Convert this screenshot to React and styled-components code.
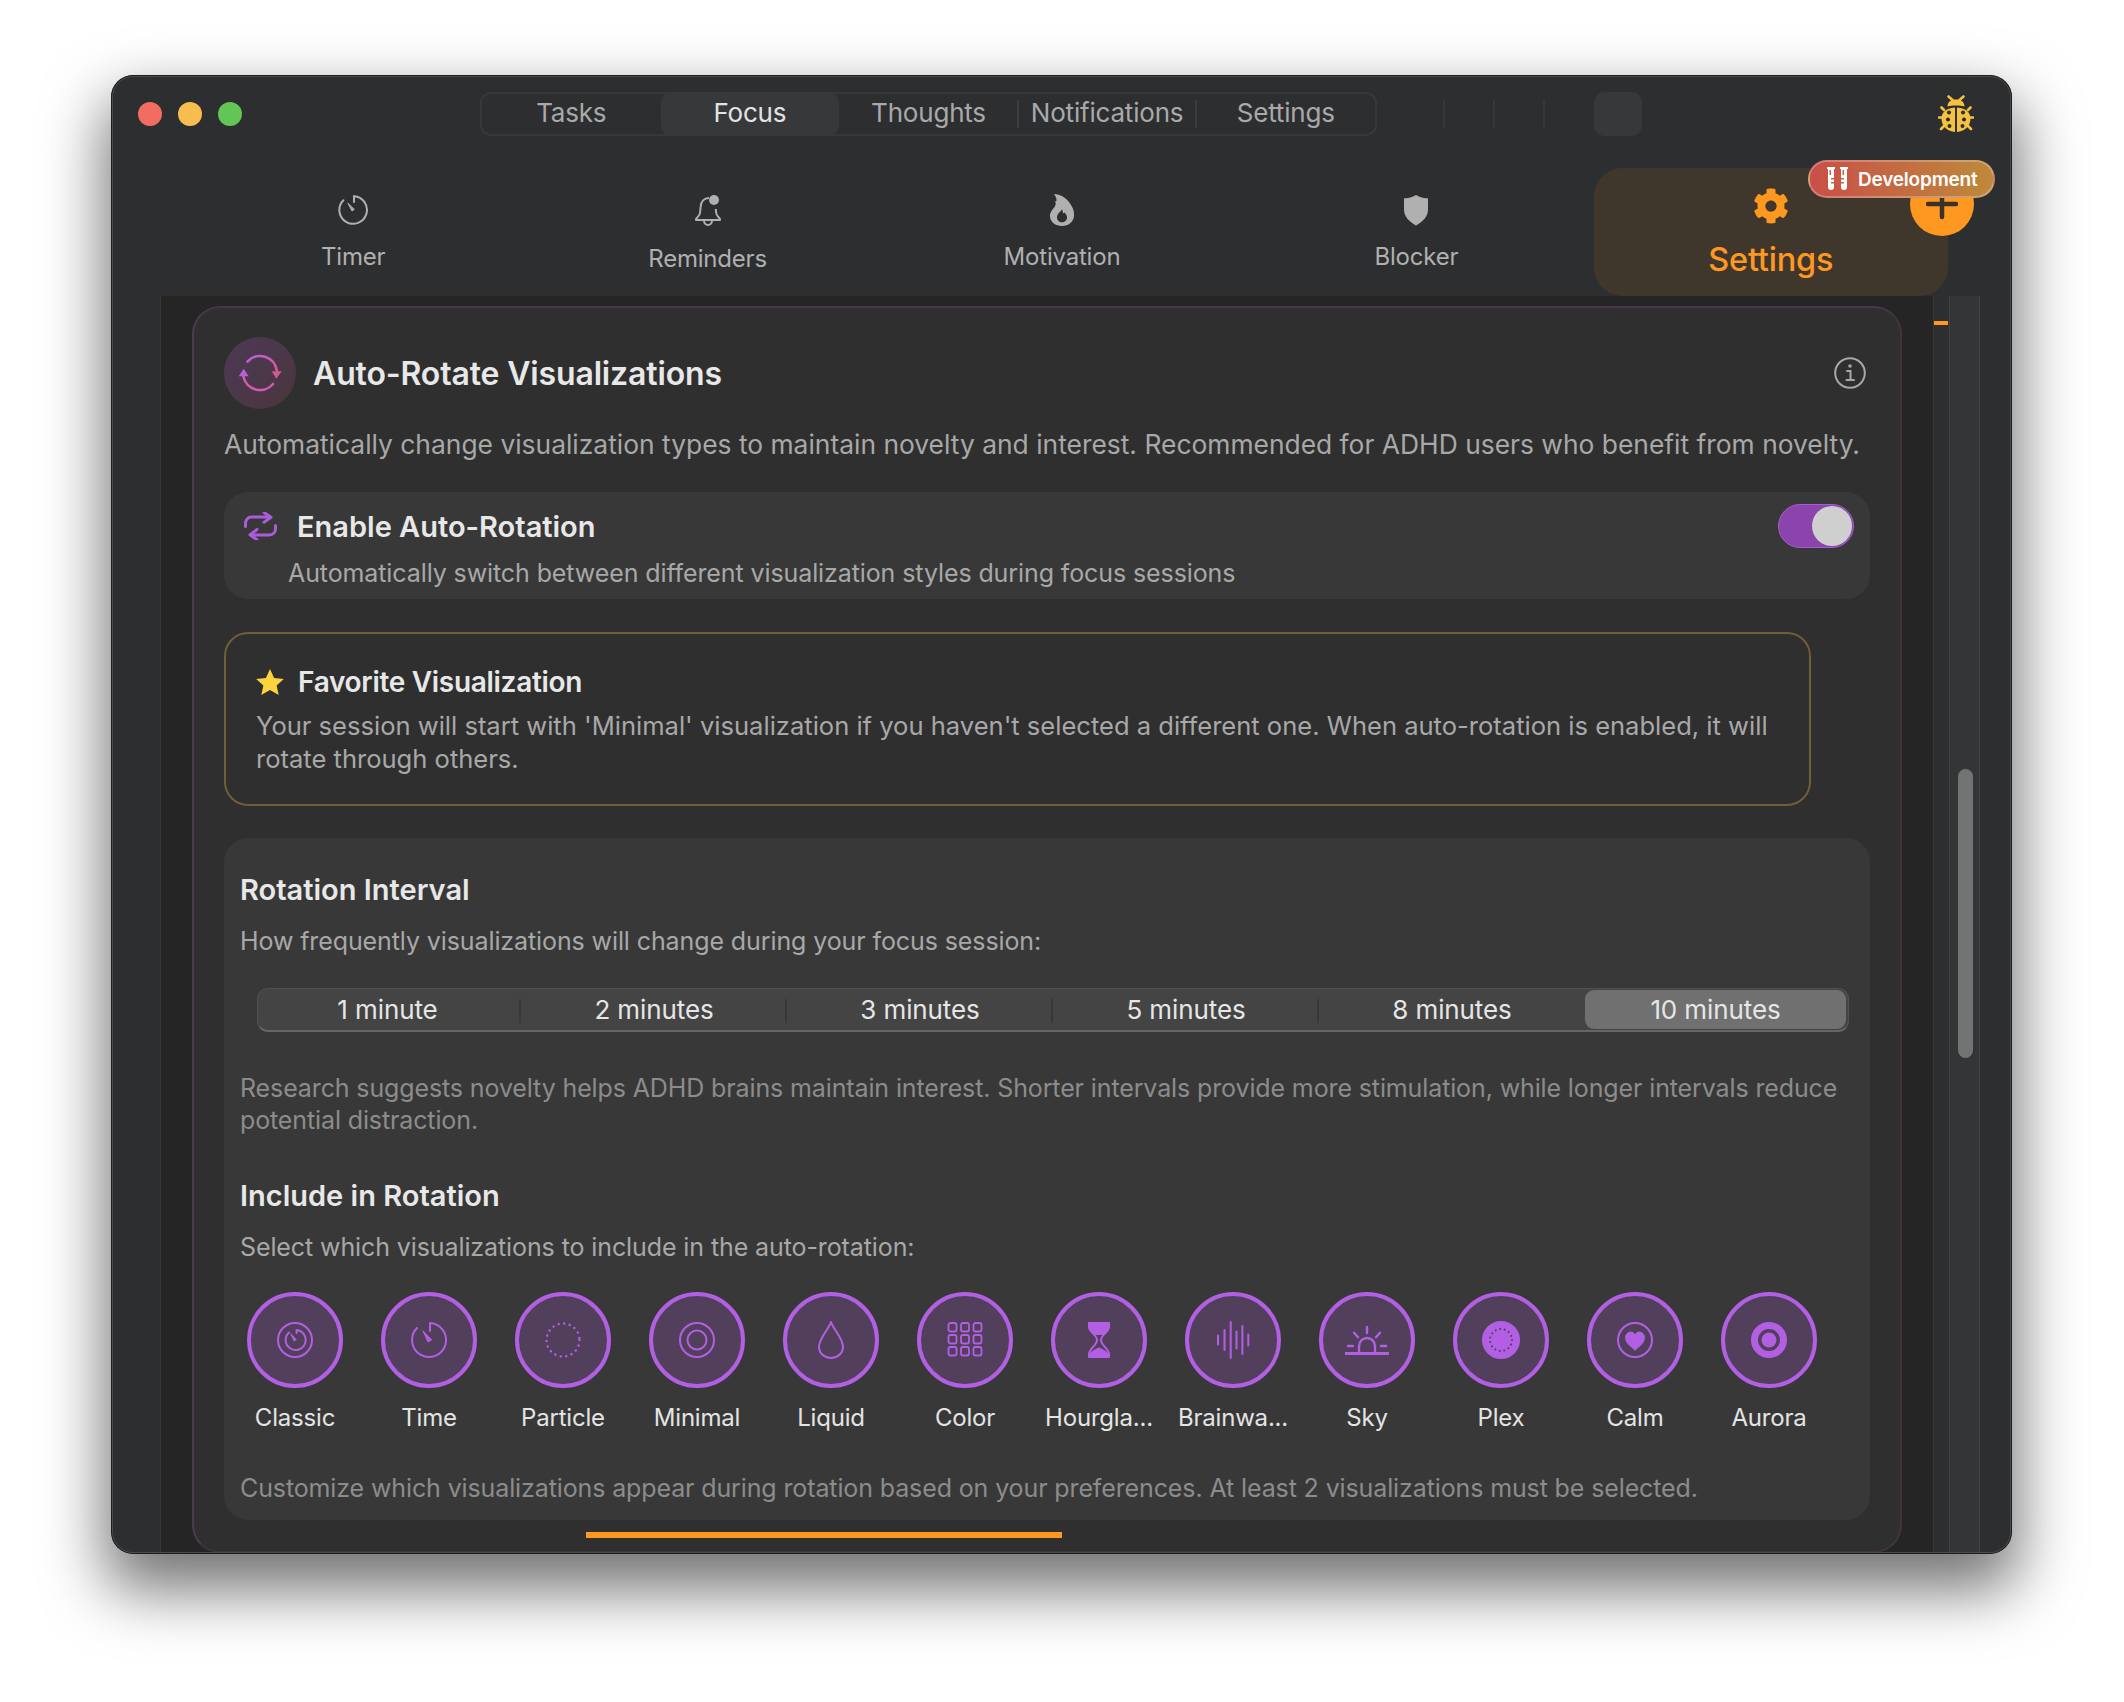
import React from 'react';
import styled, { createGlobalStyle } from 'styled-components';
import { FaCog } from 'react-icons/fa';

const GlobalStyle = createGlobalStyle`
  html, body {
    margin: 0;
    background: #fff;
  }
  body {
    font-family: Inter, "Noto Sans", sans-serif;
    -webkit-font-smoothing: antialiased;
  }
  * { box-sizing: border-box; }
`;

const Page = styled.div`
  width: 2124px;
  height: 1702px;
  padding: 75px 0 0 111px;
  overflow: hidden;
  background: #fff;
`;

const Window = styled.div`
  position: relative;
  width: 1901px;
  height: 1479px;
  display: flex;
  flex-direction: column;
  background: #2d2e30;
  border-radius: 22px;
  overflow: hidden;
`;

const WindowShadow = styled.div`
  width: 1901px;
  height: 1479px;
  border-radius: 22px;
  box-shadow: 0 30px 62px 6px rgba(0, 0, 0, 0.55);
`;

const WindowEdge = styled.div`
  position: absolute;
  inset: 0;
  border-radius: 22px;
  box-shadow: inset 0 0 0 1px #1c1c1c, inset 0 0 0 2px #4a4b4e;
  pointer-events: none;
`;

const TitleBar = styled.div`
  height: 93px;
  padding: 17px 0 0 27px;
  display: flex;
  align-items: flex-start;
`;

const Lights = styled.div`
  display: flex;
  gap: 16px;
  margin: 10px 238px 0 0;
`;

const Light = styled.span`
  width: 24px;
  height: 24px;
  border-radius: 50%;
  background: ${(p) => p.$color};
`;

const Tabs = styled.div`
  width: 897px;
  height: 44px;
  display: grid;
  grid-template-columns: repeat(5, 1fr);
  border: 2px solid #37383a;
  border-radius: 11px;
  margin-right: 66px;
`;

const Tab = styled.div`
  position: relative;
  margin: -2px 0;
  padding-bottom: 3px;
  display: flex;
  align-items: center;
  justify-content: center;
  font-size: 26px;
  letter-spacing: -0.2px;
  color: ${(p) => (p.$active ? '#e3e3e3' : '#a9a9a9')};
  background: ${(p) => (p.$active ? '#37383a' : 'transparent')};
  border-radius: 11px;

  &::after {
    content: '';
    display: ${(p) => (p.$sep ? 'block' : 'none')};
    position: absolute;
    right: -1px;
    top: 8px;
    width: 2px;
    height: 28px;
    background: #3b3c3e;
  }
`;

const Ticks = styled.div`
  display: flex;
  gap: 48px;
  margin: 8px 49px 0 0;
`;

const Tick = styled.span`
  width: 2px;
  height: 28px;
  background: #37383a;
`;

const Blank = styled.div`
  width: 48px;
  height: 44px;
  border-radius: 10px;
  background: #37383a;
  margin-right: 296px;
`;

const BugSlot = styled.div`
  margin-top: 3px;
  line-height: 0;
`;

const Nav = styled.div`
  height: 128px;
  margin-left: 65px;
  width: 1772px;
  display: grid;
  grid-template-columns: repeat(5, 354.4px);
`;

const NavItem = styled.div`
  display: flex;
  flex-direction: column;
  align-items: center;
  padding-top: ${(p) => (p.$active ? '16px' : '20px')};
  border-radius: 28px;
  background: ${(p) => (p.$active ? '#40372c' : 'transparent')};
  color: ${(p) => (p.$active ? '#ff9820' : '#b0b0b0')};
`;

const NavIcon = styled.div`
  height: ${(p) => p.$h || 44}px;
  display: flex;
  align-items: center;
  justify-content: center;
`;

const NavLabel = styled.div`
  margin-top: ${(p) => (p.$active ? '17px' : '10px')};
  font-size: ${(p) => (p.$active ? '32.5px' : '24px')};
  line-height: 30px;
  letter-spacing: -0.2px;
  font-weight: ${(p) => (p.$active ? 500 : 400)};
`;

const DevBadge = styled.div`
  position: absolute;
  left: 1697px;
  top: 85px;
  width: 187px;
  height: 38px;
  z-index: 3;
  display: flex;
  align-items: center;
  gap: 9px;
  padding-left: 16px;
  border-radius: 19px;
  border: 2px solid rgba(255, 255, 255, 0.25);
  background: linear-gradient(90deg, #c94f48, #bd8a3b);
  color: #fff;
  font-size: 19px;
  font-weight: 600;
  letter-spacing: -0.2px;
`;

const PlusButton = styled.div`
  position: absolute;
  left: 1799px;
  top: 97px;
  width: 64px;
  height: 64px;
  z-index: 2;
  border-radius: 50%;
  background: #ff9820;
  display: flex;
  align-items: center;
  justify-content: center;
`;

const Body = styled.div`
  flex: 1;
  min-height: 0;
  display: flex;
`;

const Gutter = styled.div`
  width: 49px;
  flex: none;
`;

const Scroller = styled.div`
  width: 1774px;
  flex: none;
  display: flex;
  padding: 10px 32px 1px 31px;
  background: #252525;
  border-left: 1px solid #3d352c;
  border-right: 1px solid #3d352c;
`;

const Card = styled.div`
  width: 1710px;
  flex: none;
  padding: 29px 30px 0 30px;
  background: #2f2f2f;
  border-radius: 28px;
  border: 2px solid #40343f;
  border-top-color: #44364c;
  border-left-color: #4a3a52;
`;

const CardHeader = styled.div`
  display: flex;
  align-items: center;
  height: 72px;
`;

const HeaderBadge = styled.div`
  width: 72px;
  height: 72px;
  border-radius: 50%;
  background: linear-gradient(135deg, #4c3a55, #4a353d);
  display: flex;
  align-items: center;
  justify-content: center;
`;

const CardTitle = styled.div`
  flex: 1;
  margin-left: 17px;
  font-size: 32px;
  font-weight: 600;
  letter-spacing: -0.15px;
  color: #e8e8e8;
`;

const InfoSlot = styled.div`
  margin-right: 4px;
  line-height: 0;
`;

const Lead = styled.div`
  margin-top: 19px;
  font-size: 26.4px;
  line-height: 32px;
  color: #a8a8a8;
  white-space: nowrap;
`;

const EnablePanel = styled.div`
  margin-top: 32px;
  height: 107px;
  padding: 16px 16px 0 20px;
  background: #383838;
  border-radius: 24px;
  display: flex;
  justify-content: space-between;
  align-items: flex-start;
`;

const EnableTitle = styled.div`
  display: flex;
  align-items: center;
  gap: 20px;
  height: 36px;
  font-size: 29px;
  font-weight: 600;
  color: #e8e8e8;
`;

const EnableText = styled.div`
  margin: 13px 0 0 44px;
  font-size: 25px;
  line-height: 32px;
  letter-spacing: -0.1px;
  color: #a8a8a8;
`;

const Toggle = styled.div`
  width: 76px;
  height: 44px;
  margin-top: -4px;
  padding: 1px;
  border-radius: 22px;
  border: 1px solid #a45fca;
  background: #8a44ac;
  display: flex;
  justify-content: flex-end;
`;

const Knob = styled.span`
  width: 40px;
  height: 40px;
  border-radius: 50%;
  background: #cfcfcf;
`;

const FavoriteBox = styled.div`
  width: 1587px;
  height: 174px;
  margin-top: 33px;
  padding: 30px 30px 0 30px;
  border: 2px solid #6e5f35;
  border-radius: 24px;
`;

const FavoriteTitle = styled.div`
  display: flex;
  align-items: center;
  gap: 14px;
  height: 36px;
  font-size: 28px;
  font-weight: 600;
  letter-spacing: -0.3px;
  color: #e8e8e8;
`;

const FavoriteText = styled.div`
  margin-top: 10px;
  font-size: 25.55px;
  line-height: 32.5px;
  color: #a8a8a8;
`;

const RotationPanel = styled.div`
  height: 682px;
  margin-top: 32px;
  padding: 34px 16px 0;
  border-radius: 24px;
  background: #383838;
`;

const SectionTitle = styled.div`
  height: 36px;
  line-height: 36px;
  font-size: 29px;
  font-weight: 600;
  color: #e8e8e8;
`;

const SectionText = styled.div`
  margin-top: 17px;
  font-size: 25px;
  line-height: 32px;
  letter-spacing: -0.1px;
  color: #a8a8a8;
`;

const Segments = styled.div`
  width: 1592px;
  height: 44px;
  margin: 31px 0 0 17px;
  padding: 1px 0;
  display: grid;
  grid-template-columns: 263px repeat(4, 266px) 261px;
  border-radius: 11px;
  background: #444;
  border: 1px solid #505050;
  border-bottom: 2px solid #666;
`;

const Segment = styled.div`
  position: relative;
  display: flex;
  align-items: center;
  justify-content: center;
  padding-right: ${(p) => (p.$first ? '4px' : '0')};
  padding-bottom: 1px;
  font-size: 26px;
  letter-spacing: -0.1px;
  color: #e6e6e6;
  border-radius: 9px;
  background: ${(p) => (p.$active ? '#707070' : 'transparent')};

  &::after {
    content: '';
    display: ${(p) => (p.$sep ? 'block' : 'none')};
    position: absolute;
    right: 0;
    top: 9px;
    bottom: 6px;
    width: 2px;
    background: #383838;
  }
`;

const Note = styled.div`
  margin-top: ${(p) => p.$top}px;
  font-size: 25px;
  line-height: 32px;
  letter-spacing: -0.12px;
  color: #8c8c8c;
`;

const IncludeTitle = styled(SectionTitle)`
  margin-top: 42px;
`;

const VizGrid = styled.div`
  margin: 29px 0 0 -12px;
  display: grid;
  grid-template-columns: repeat(12, 134px);
`;

const VizItem = styled.div`
  display: flex;
  flex-direction: column;
  align-items: center;
`;

const VizCircle = styled.div`
  width: 96px;
  height: 96px;
  border-radius: 50%;
  border: 4px solid #b25fe4;
  background: #523f5c;
  color: #b25fe4;
  display: flex;
  align-items: center;
  justify-content: center;
`;

const VizLabel = styled.div`
  margin-top: 16px;
  max-width: 118px;
  font-size: 24px;
  line-height: 28px;
  letter-spacing: -0.2px;
  white-space: nowrap;
  color: #e4e4e4;
`;

const ProgressBar = styled.div`
  width: 476px;
  height: 6px;
  margin: 12px 0 0 362px;
  background: #ff9820;
`;

const ScrollRail = styled.div`
  position: relative;
  width: 46px;
  flex: none;
  padding-left: 15px;
`;

const Marker = styled.span`
  position: absolute;
  left: 0;
  top: 25px;
  width: 14px;
  height: 4px;
  background: #ff9820;
`;

const Track = styled.div`
  width: 31px;
  height: 100%;
  padding: 473px 6px 0 8px;
  background: #343537;
  border-left: 1px solid #404144;
  border-right: 1px solid #404144;
`;

const Thumb = styled.div`
  width: 15px;
  height: 289px;
  border-radius: 8px;
  background: #727473;
`;

const TimerIcon = () => (
  <svg width="32" height="32" viewBox="0 0 32 32" fill="none" stroke="currentColor" strokeWidth="2" strokeLinecap="round">
    <path d="M17 2.2a13.8 13.8 0 1 1-10.6 4" />
    <path d="M17 2.2V8" />
    <path d="M11 9.5l4 7.5 2-1.4z" fill="currentColor" strokeWidth="1" />
  </svg>
);

const BellIcon = () => (
  <svg width="30" height="34" viewBox="0 0 30 34" fill="none" stroke="currentColor" strokeWidth="2" strokeLinejoin="round">
    <path d="M16 4c-5 0-8 3.5-8.3 8.5L7 19c-.3 2.5-2.5 4-4 6v1h24v-1c-1.500-2-3.500-3.500-3.800-6l-.4-4" />
    <path d="M11 26.500c0 6 8 6 8 0" />
    <circle cx="21" cy="6" r="5" fill="currentColor" stroke="none" />
  </svg>
);

const FlameIcon = () => (
  <svg width="26" height="32" viewBox="0 0 26 32" fill="currentColor">
    <path fillRule="evenodd" d="M5 0c6.500.5 11 3 15 8 3.500 4.500 5.500 9 5 14-.5 6-5.500 10-12 10S1 28 1 22c0-4 2.500-6.500 4.500-9C7 11 7 9 6 7 8 8 8.500 5 5 0zm8 15c-.5 2.500-5 4-5 8.500 0 2.800 2.200 4.800 5 4.800s5-2 5-4.800c0-2.500-1.500-3-2-5-.8 1-1.600 1-2 .2-.4-1-.5-2.500-1-3.700z" />
  </svg>
);

const ShieldIcon = () => (
  <svg width="26" height="32" viewBox="0 0 26 32" fill="currentColor">
    <path d="M13 1c3 1.800 6.500 3 11 3.300.8 0 1 .5 1 1.200v10c0 7-5 12-12 16C6 27.500 1 22.500 1 15.500v-10c0-.7.2-1.200 1-1.200C6.500 4 10 2.800 13 1z" />
  </svg>
);

const BugIcon = () => (
  <svg width="36" height="38" viewBox="0 0 36 38" fill="#f5c142">
    <path d="M10.500 1.500L14.500 5M25.500 1.500L21.500 5M3.500 12.500L6 15M32.500 12.500L30 15M1 22.500H4M35 22.500H32M3 34L6 31M33 34L30 31" stroke="#f5c142" strokeWidth="2.600" strokeLinecap="round" />
    <path d="M9.500 11.500C9.500 7 13 4.500 18 4.500s8.500 2.500 8.500 7c-2.500-.7-5.500-1-8.500-1s-6 .3-8.500 1z" />
    <path d="M17 12.500V37C9.500 36.500 3.500 31 3.500 23.500c0-5.500 4-10.500 13.500-11zM19 12.500C28.500 13 32.500 18 32.500 23.500 32.500 31 26.500 36.500 19 37z" />
    <g fill="#2d2e30">
      <circle cx="11" cy="17.500" r="2" /><circle cx="25" cy="17.500" r="2" />
      <circle cx="10" cy="24.500" r="2" /><circle cx="26" cy="24.500" r="2" />
      <circle cx="11.500" cy="31" r="2" /><circle cx="24.500" cy="31" r="2" />
    </g>
  </svg>
);

const TubesIcon = () => (
  <svg width="23" height="24" viewBox="0 0 23 24" fill="#fff">
    <path d="M1 0h8v2H8v18a3 3 0 0 1-6 0V2H1zM14 0h8v2h-1v18a3 3 0 0 1-6 0V2h-1z" />
    <path d="M3.500 3h1.500v5H3.500zM16.500 3H18v5h-1.500z" fill="#c4654a" />
    <path d="M5 11h3v1.500H5zM5 15h3v1.500H5zM15 11h3v1.500h-3zM15 15h3v1.500h-3z" fill="#c4654a" />
  </svg>
);

const PlusIcon = () => (
  <svg width="32" height="32" viewBox="0 0 32 32" stroke="#3a3128" strokeWidth="4.500" strokeLinecap="round">
    <path d="M16 3v26M2 16h28" />
  </svg>
);

const RotateIcon = () => (
  <svg width="44" height="44" viewBox="0 0 44 44" fill="none" strokeWidth="2.600" strokeLinecap="round">
    <defs>
      <linearGradient id="rotA" x1="0" y1="0" x2="1" y2="1">
        <stop offset="0" stopColor="#b85fdc" />
        <stop offset="1" stopColor="#d85a90" />
      </linearGradient>
    </defs>
    <path d="M9.500 10.500A17 17 0 0 1 38.800 19.500" stroke="url(#rotA)" />
    <path d="M35 33A17 17 0 0 1 5.300 25" stroke="#cf5cae" />
    <path d="M.7 25.300L5.700 17.700 10.700 25.300z" fill="#b85fdc" />
    <path d="M33.700 20.300L43.700 20.300 38.300 27.700z" fill="#d2588f" />
  </svg>
);

const InfoIcon = () => (
  <svg width="32" height="32" viewBox="0 0 32 32" fill="none" stroke="#a8a8a8" strokeWidth="2">
    <circle cx="16" cy="16" r="14.800" />
    <path d="M13 14h3.500v9M12.500 23h7.500" strokeLinecap="round" />
    <circle cx="16" cy="9" r="1.800" fill="#a8a8a8" stroke="none" />
  </svg>
);

const RepeatIcon = () => (
  <svg width="33" height="28" viewBox="0 0 33 28" fill="none" stroke="#ab5bdc" strokeWidth="3" strokeLinecap="round" strokeLinejoin="round">
    <path d="M1.500 14.500v-3c0-3.600 2.500-6.500 6-6.500h18" />
    <path d="M20 .5L27 5.200l-7 5" />
    <path d="M31.500 13.500v3c0 3.600-2.500 6.500-6 6.500H7" />
    <path d="M13 17.500L6 22.800l7 5" />
  </svg>
);

const StarIcon = () => (
  <svg width="28" height="26" viewBox="0 0 28 26" fill="#fbd33f">
    <path d="M14 0l4.100 9 9.700 1-7.200 6.500 2.100 9.500L14 21l-8.700 5 2.100-9.500L.2 10l9.700-1z" />
  </svg>
);

const Glyph = ({ children, fill = 'none' }) => (
  <svg width="44" height="44" viewBox="0 0 44 44" fill={fill} stroke="currentColor" strokeWidth="2" strokeLinecap="round" strokeLinejoin="round">
    {children}
  </svg>
);

const vizGlyphs = {
  Classic: (
    <Glyph>
      <circle cx="22" cy="22" r="17" />
      <path d="M23.500 12a10 10 0 1 1-7.500 2.500M23.500 12v3" />
      <path d="M18 16l3 7 2-1.200z" fill="currentColor" strokeWidth="1" />
    </Glyph>
  ),
  Time: (
    <Glyph>
      <path d="M23 5a17 17 0 1 1-13 5M23 5v8" />
      <path d="M16 13l5 11 3.500-2z" fill="currentColor" strokeWidth="1" />
    </Glyph>
  ),
  Particle: (
    <Glyph>
      <circle cx="22" cy="22" r="16.500" strokeWidth="2.400" strokeDasharray="0.1 5.500" />
    </Glyph>
  ),
  Minimal: (
    <Glyph>
      <circle cx="22" cy="22" r="17" />
      <circle cx="22" cy="22" r="9.500" />
    </Glyph>
  ),
  Liquid: (
    <Glyph>
      <path d="M22 4C20 11 10 20 10 29a12 11 0 0 0 24 0C34 20 24 11 22 4z" />
    </Glyph>
  ),
  Color: (
    <Glyph>
      {[5, 17, 29].map((y) => [5.5, 18, 30.5].map((x) => (
        <rect key={`${x}-${y}`} x={x} y={y} width="8" height="8.500" rx="2" strokeWidth="1.800" />
      )))}
    </Glyph>
  ),
  Hourglass: (
    <Glyph>
      <path d="M12 5h20v3c0 6-8 9-8 14s7 8 8 14v3H12v-3c1-6 8-9 8-14s-8-8-8-14z" />
      <path d="M12 5h20v4c-.5 3-2.500 5-5 7H17c-2.500-2-4.500-4-5-7z" fill="currentColor" />
      <path d="M13 37c1.500-2.500 6-5 9-6.500 3 1.500 7.500 4 9 6.500v2H13z" fill="currentColor" />
    </Glyph>
  ),
  Brainwave: (
    <Glyph>
      <path d="M7 17.500v9M13.500 12v20M19.700 4v36M25.500 13.500v17M31.400 8v28M37.300 16.500v11" />
    </Glyph>
  ),
  Sky: (
    <Glyph>
      <path d="M0 35.500h44" strokeWidth="3" strokeLinecap="butt" />
      <path d="M14 34v-6a8 8 0 0 1 16 0v6" strokeWidth="2.400" />
      <path d="M22 9v6M9 14.700l4 4.600M35 14.700l-4 4.600M3 28h5M36 28h5" strokeWidth="2.400" />
    </Glyph>
  ),
  Plex: (
    <Glyph>
      <circle cx="22" cy="22" r="18" fill="currentColor" />
      <circle cx="22" cy="22" r="11" stroke="#523f5c" strokeWidth="2" strokeDasharray="0.1 4.500" />
    </Glyph>
  ),
  Calm: (
    <Glyph>
      <circle cx="22" cy="22" r="17" />
      <path d="M22 32c-5-4-9.500-7.500-9.500-12.500 0-3 2.300-5.500 5-5.500 2 0 3.500 1 4.500 3 1-2 2.500-3 4.500-3 2.700 0 5 2.500 5 5.500C31.500 24.500 27 28 22 32z" fill="currentColor" strokeWidth="1" />
    </Glyph>
  ),
  Aurora: (
    <Glyph>
      <circle cx="22" cy="22" r="14.500" strokeWidth="7" />
      <circle cx="22" cy="22" r="7.500" fill="currentColor" stroke="none" />
    </Glyph>
  ),
};

const topTabs = ['Tasks', 'Focus', 'Thoughts', 'Notifications', 'Settings'];
const intervals = ['1 minute', '2 minutes', '3 minutes', '5 minutes', '8 minutes', '10 minutes'];
const visualizations = [
  { key: 'Classic', label: 'Classic' },
  { key: 'Time', label: 'Time' },
  { key: 'Particle', label: 'Particle' },
  { key: 'Minimal', label: 'Minimal' },
  { key: 'Liquid', label: 'Liquid' },
  { key: 'Color', label: 'Color' },
  { key: 'Hourglass', label: 'Hourgla...' },
  { key: 'Brainwave', label: 'Brainwa...' },
  { key: 'Sky', label: 'Sky' },
  { key: 'Plex', label: 'Plex' },
  { key: 'Calm', label: 'Calm' },
  { key: 'Aurora', label: 'Aurora' },
];

function App() {
  return (
    <Page>
      <GlobalStyle />
      <WindowShadow>
        <Window>
          <TitleBar>
            <Lights>
              <Light $color="#f26d60" />
              <Light $color="#f7be4f" />
              <Light $color="#62c655" />
            </Lights>
            <Tabs>
              {topTabs.map((t, i) => (
                <Tab key={t} $active={t === 'Focus'} $sep={i === 2 || i === 3}>{t}</Tab>
              ))}
            </Tabs>
            <Ticks>
              <Tick />
              <Tick />
              <Tick />
            </Ticks>
            <Blank />
            <BugSlot><BugIcon /></BugSlot>
          </TitleBar>

          <Nav>
            <NavItem>
              <NavIcon><TimerIcon /></NavIcon>
              <NavLabel>Timer</NavLabel>
            </NavItem>
            <NavItem>
              <NavIcon $h={46}><BellIcon /></NavIcon>
              <NavLabel>Reminders</NavLabel>
            </NavItem>
            <NavItem>
              <NavIcon><FlameIcon /></NavIcon>
              <NavLabel>Motivation</NavLabel>
            </NavItem>
            <NavItem>
              <NavIcon><ShieldIcon /></NavIcon>
              <NavLabel>Blocker</NavLabel>
            </NavItem>
            <NavItem $active>
              <NavIcon><FaCog size={36} /></NavIcon>
              <NavLabel $active>Settings</NavLabel>
            </NavItem>
          </Nav>

          <DevBadge><TubesIcon />Development</DevBadge>
          <PlusButton><PlusIcon /></PlusButton>

          <Body>
            <Gutter />
            <Scroller>
              <Card>
                <CardHeader>
                  <HeaderBadge><RotateIcon /></HeaderBadge>
                  <CardTitle>Auto-Rotate Visualizations</CardTitle>
                  <InfoSlot><InfoIcon /></InfoSlot>
                </CardHeader>
                <Lead>Automatically change visualization types to maintain novelty and interest. Recommended for ADHD users who benefit from novelty.</Lead>

                <EnablePanel>
                  <div>
                    <EnableTitle><RepeatIcon />Enable Auto-Rotation</EnableTitle>
                    <EnableText>Automatically switch between different visualization styles during focus sessions</EnableText>
                  </div>
                  <Toggle><Knob /></Toggle>
                </EnablePanel>

                <FavoriteBox>
                  <FavoriteTitle><StarIcon />Favorite Visualization</FavoriteTitle>
                  <FavoriteText>Your session will start with 'Minimal' visualization if you haven't selected a different one. When auto-rotation is enabled, it will rotate through others.</FavoriteText>
                </FavoriteBox>

                <RotationPanel>
                  <SectionTitle>Rotation Interval</SectionTitle>
                  <SectionText>How frequently visualizations will change during your focus session:</SectionText>
                  <Segments>
                    {intervals.map((label, i) => (
                      <Segment key={label} $first={i === 0} $active={i === 5} $sep={i < 4}>{label}</Segment>
                    ))}
                  </Segments>
                  <Note $top={40}>Research suggests novelty helps ADHD brains maintain interest. Shorter intervals provide more stimulation, while longer intervals reduce potential distraction.</Note>

                  <IncludeTitle>Include in Rotation</IncludeTitle>
                  <SectionText>Select which visualizations to include in the auto-rotation:</SectionText>
                  <VizGrid>
                    {visualizations.map((v) => (
                      <VizItem key={v.key}>
                        <VizCircle>{vizGlyphs[v.key]}</VizCircle>
                        <VizLabel>{v.label}</VizLabel>
                      </VizItem>
                    ))}
                  </VizGrid>
                  <Note $top={40}>Customize which visualizations appear during rotation based on your preferences. At least 2 visualizations must be selected.</Note>
                </RotationPanel>
                <ProgressBar />
              </Card>
            </Scroller>
            <ScrollRail>
              <Marker />
              <Track><Thumb /></Track>
            </ScrollRail>
          </Body>
          <WindowEdge />
        </Window>
      </WindowShadow>
    </Page>
  );
}

export default App;
